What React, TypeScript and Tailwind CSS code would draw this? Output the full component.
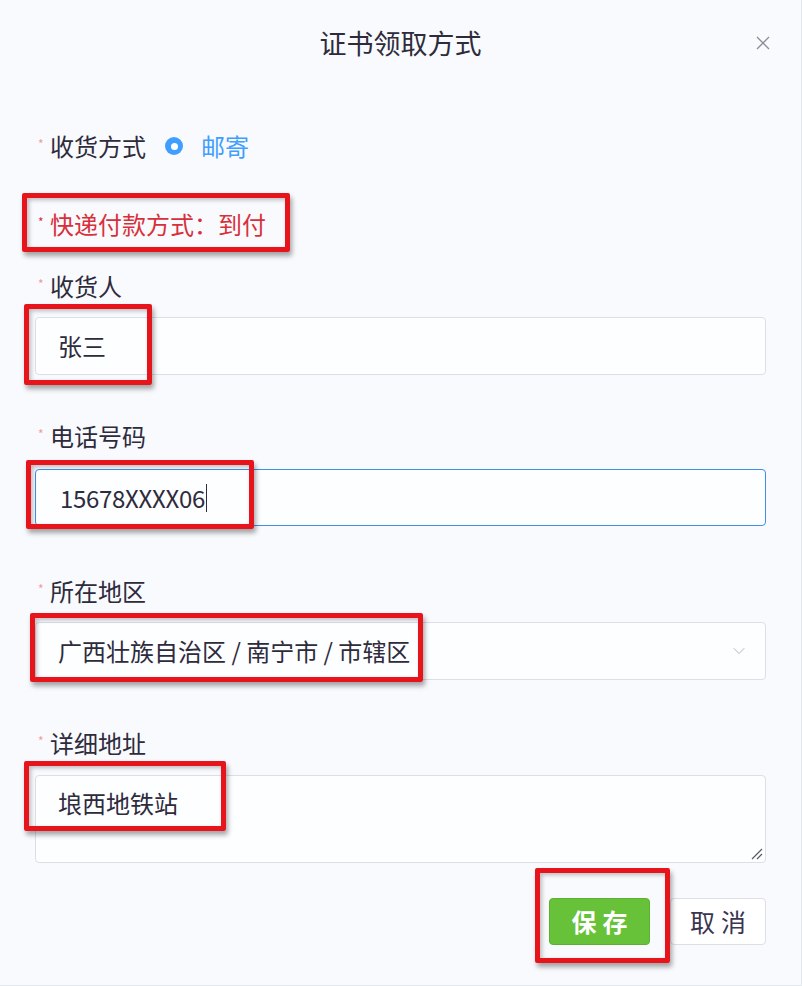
import React from "react";
import { ChevronDown } from "lucide-react";

// red annotation boxes drawn over the form (page coordinates)
const marks = [
  { id: "pay", left: 22, top: 193, width: 268, height: 59 },
  { id: "name", left: 24, top: 304, width: 128, height: 81 },
  { id: "phone", left: 26, top: 460, width: 228, height: 69 },
  { id: "region", left: 30, top: 613, width: 393, height: 69 },
  { id: "addr", left: 24, top: 761, width: 202, height: 70 },
  { id: "save", left: 535, top: 868, width: 135, height: 95 },
];

const Label: React.FC<{ text: string; red?: boolean }> = ({ text, red }) => (
  <div
    className={`flex h-[30px] items-center text-[24px] leading-none ${red ? "text-[#d8303b]" : "text-[#2e2b3c]"}`}
  >
    <span
      className={`w-[15px] self-start pl-[3px] pt-[7px] text-[12px] leading-none ${red ? "text-[#d8303b]" : "text-[#f19a9a]"}`}
    >
      *
    </span>
    <span>{text}</span>
  </div>
);

const App: React.FC = () => {
  return (
    <div className="relative h-[986px] w-[802px] overflow-hidden border-r border-b border-[#e3e7ee] bg-[#f8fafd] font-['Noto_Sans_CJK_SC','Noto_Sans',sans-serif]">
      {/* header */}
      <div className="grid h-[86px] grid-cols-[1fr_auto_1fr] items-center">
        <div />
        <h2 className="text-[27px] font-normal text-[#2e2b3c]">证书领取方式</h2>
        <div className="flex justify-end pr-[30px]">
          <svg width="16" height="16" viewBox="0 0 16 16">
            <path d="M2 2 L14 14 M14 2 L2 14" stroke="#8e8c99" strokeWidth="1.3" fill="none" />
          </svg>
        </div>
      </div>

      <div className="flex flex-col px-[35px]">
        {/* 收货方式 */}
        <div className="mt-[45px] flex items-center">
          <Label text="收货方式" />
          <span className="ml-[19px] flex h-[18px] w-[18px] items-center justify-center rounded-full bg-[#409eff]">
            <span className="h-[7px] w-[7px] rounded-full bg-white" />
          </span>
          <span className="ml-[18px] text-[24px] leading-none text-[#409eff]">邮寄</span>
        </div>

        <div className="mt-[48px]">
          <Label text="快递付款方式：到付" red />
        </div>

        {/* 收货人 */}
        <div className="mt-[32px]">
          <Label text="收货人" />
        </div>
        <div className="mt-[16px] flex h-[58px] items-center rounded-[4px] border border-[#dcdfe6] bg-[#fdfeff] px-[22px] text-[24px] text-[#2e2b3c]">
          张三
        </div>

        {/* 电话号码 */}
        <div className="mt-[46px]">
          <Label text="电话号码" />
        </div>
        <div className="mt-[18px] flex h-[57px] items-center rounded-[4px] border-[1.5px] border-[#3f8fe8] bg-[#fdfeff] px-[24px] text-[24px] text-[#2e2b3c]">
          <span className="tracking-[-0.3px]">15678XXXX06</span>
          <span className="ml-[1px] h-[28px] w-[1.5px] bg-[#2e2b3c]" />
        </div>

        {/* 所在地区 */}
        <div className="mt-[50px]">
          <Label text="所在地区" />
        </div>
        <div className="mt-[16px] flex h-[58px] items-center justify-between rounded-[4px] border border-[#dcdfe6] bg-[#fdfeff] pr-[16px] pl-[22px] text-[24px] text-[#2e2b3c]">
          <span>广西壮族自治区 / 南宁市 / 市辖区</span>
          <ChevronDown className="h-[20px] w-[20px] text-[#b4b6bd]" strokeWidth={1.2} />
        </div>

        {/* 详细地址 */}
        <div className="mt-[48px]">
          <Label text="详细地址" />
        </div>
        <div className="relative mt-[17px] h-[88px] rounded-[4px] border border-[#dcdfe6] bg-[#fdfeff] px-[22px] pt-[12px] text-[24px] leading-[30px] text-[#2e2b3c]">
          埌西地铁站
          <svg
            className="absolute right-[2px] bottom-[2px]"
            width="14"
            height="14"
            viewBox="0 0 14 14"
          >
            <path d="M3 13 L13 3 M8 13 L13 8" stroke="#5a5866" strokeWidth="1.2" fill="none" />
          </svg>
        </div>

        {/* buttons */}
        <div className="mt-[35px] flex justify-end gap-[20px]">
          <button className="h-[47px] w-[101px] rounded-[4px] border border-[#5cb032] bg-[#67c23a] pl-[6px] text-[25px] font-bold tracking-[6px] text-white">
            保存
          </button>
          <button className="h-[47px] w-[96px] rounded-[4px] border border-[#dcdfe6] bg-white pl-[6px] text-[25px] tracking-[6px] text-[#3a3550]">
            取消
          </button>
        </div>
      </div>

      {marks.map((m) => (
        <div
          key={m.id}
          className="absolute rounded-[2px] border-[5px] border-[#e8141c] shadow-[2px_4px_5px_rgba(0,0,0,0.35),inset_2px_2px_4px_rgba(0,0,0,0.25)]"
          style={{ left: m.left, top: m.top, width: m.width, height: m.height }}
        />
      ))}
    </div>
  );
};

export default App;
